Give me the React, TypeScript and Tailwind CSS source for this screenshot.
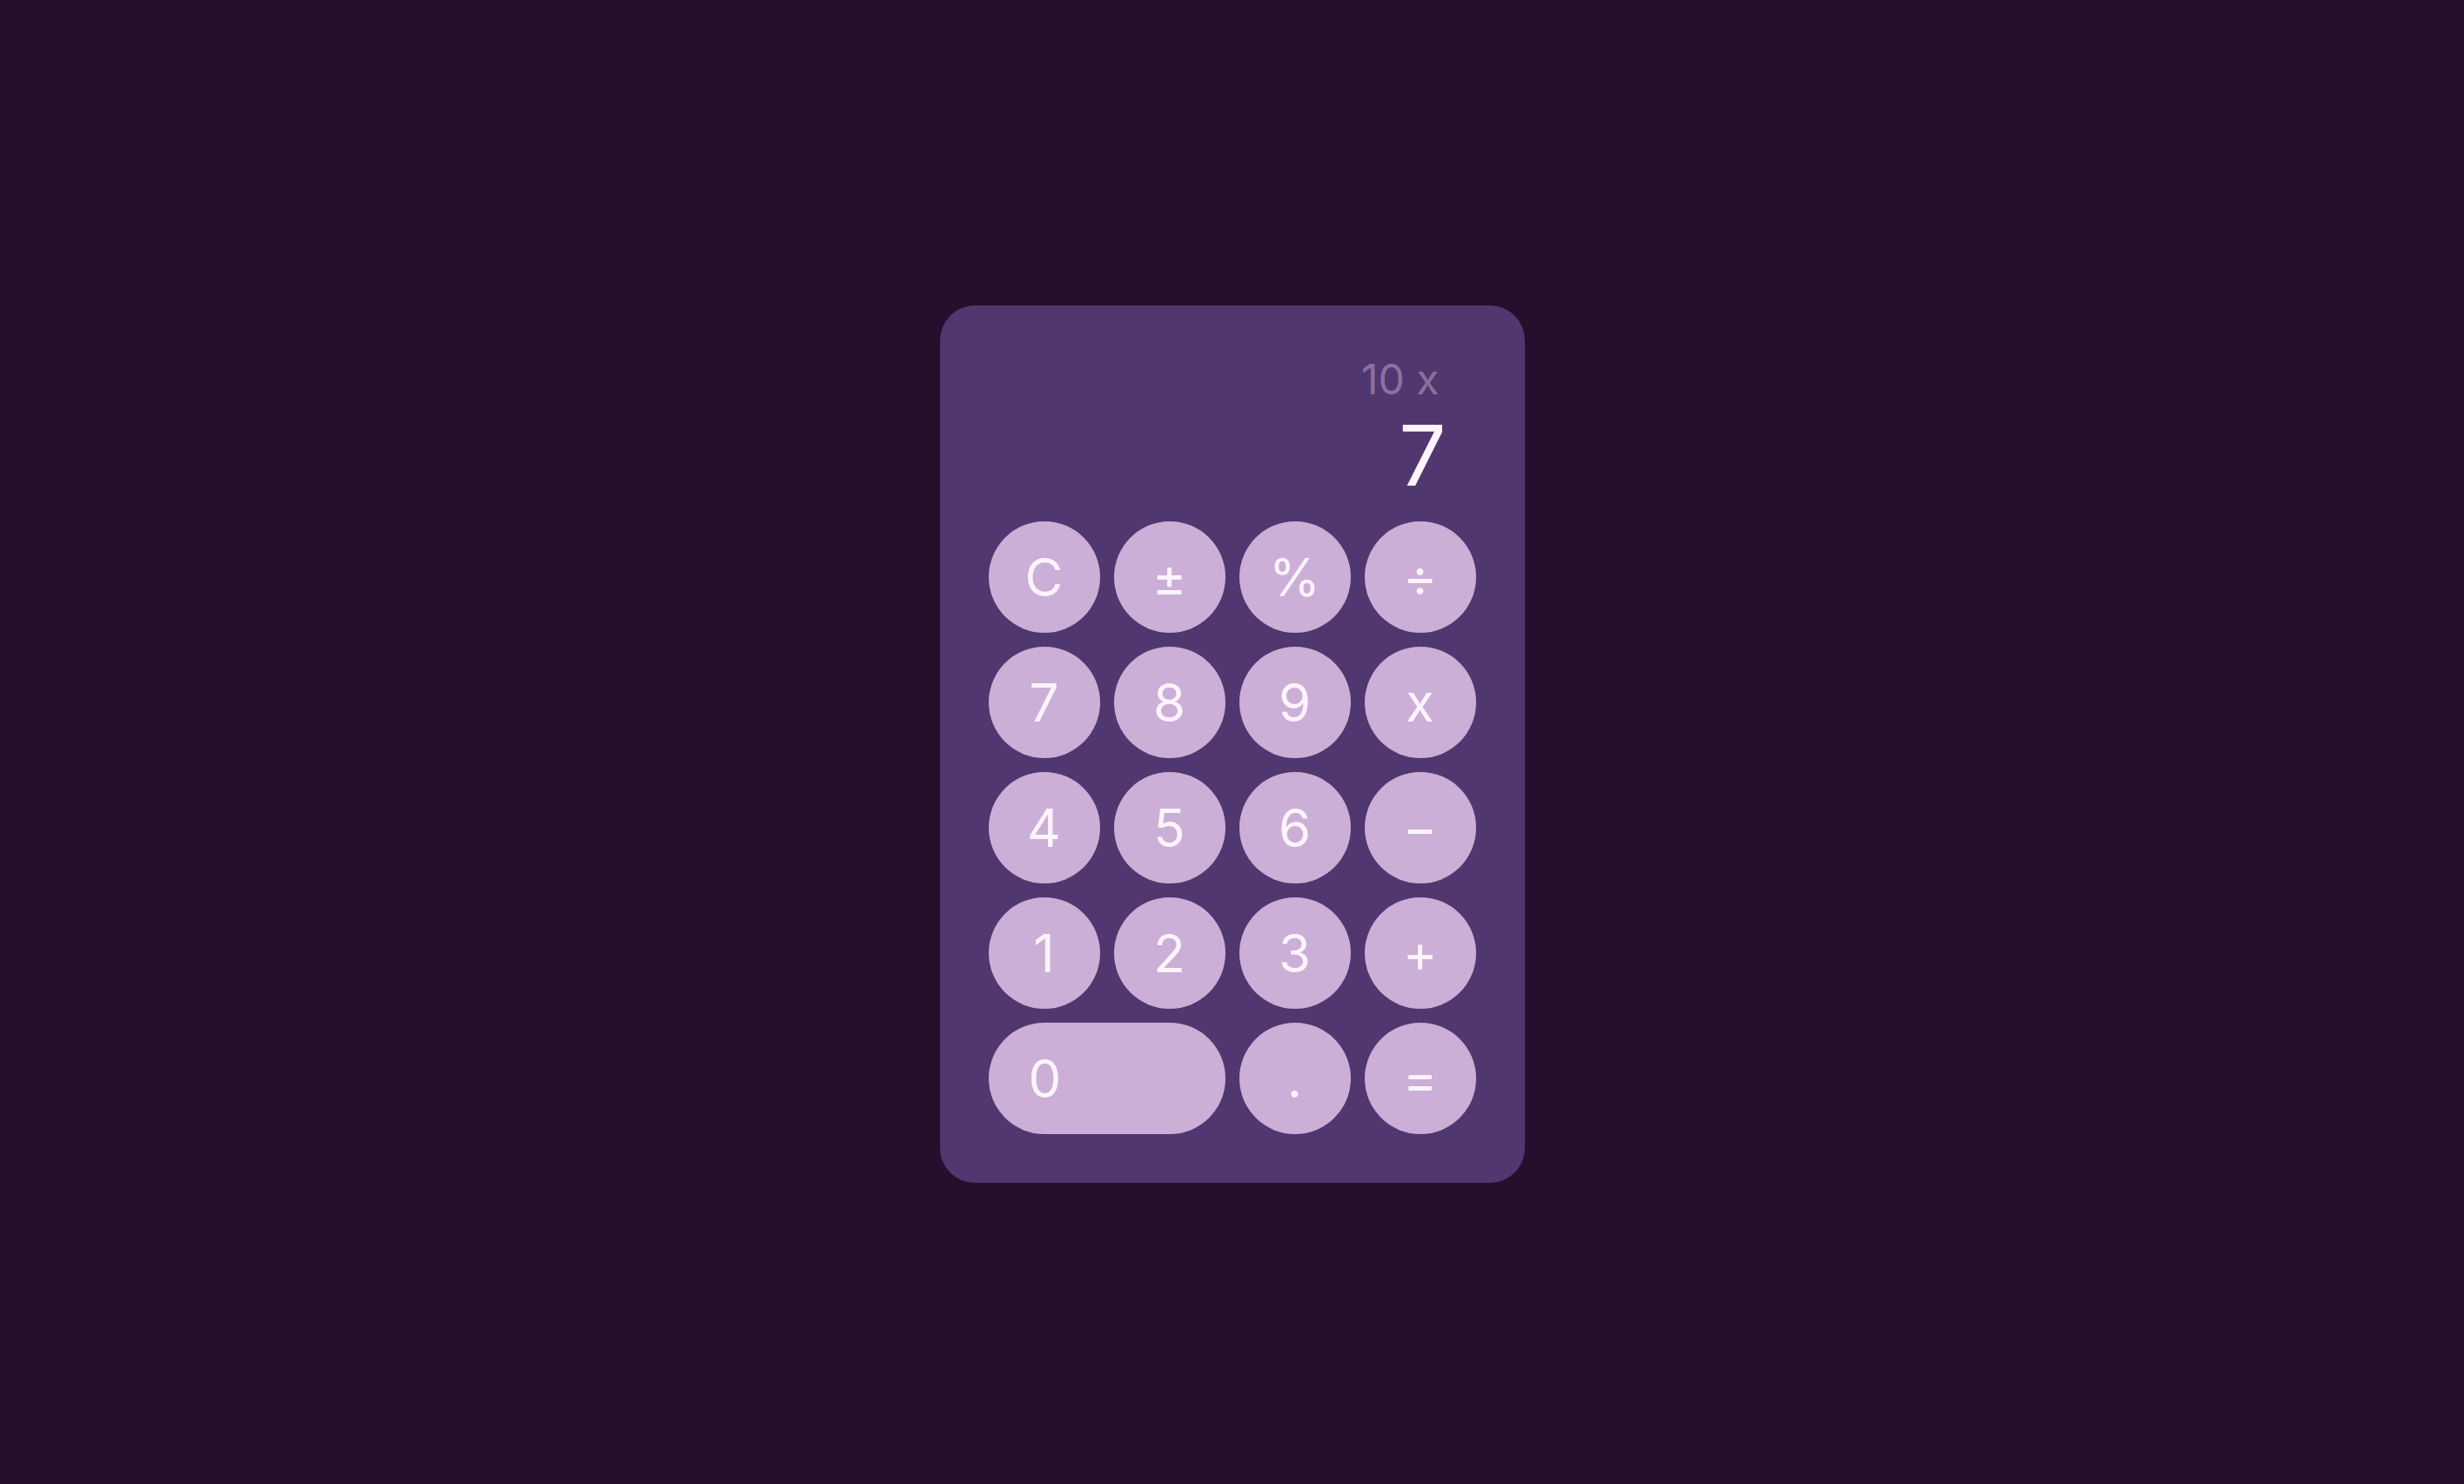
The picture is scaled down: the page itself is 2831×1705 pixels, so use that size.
type Key = {
  label: string;
  wide?: boolean;
};

const keys: Key[] = [
  { label: "C" },
  { label: "±" },
  { label: "%" },
  { label: "÷" },
  { label: "7" },
  { label: "8" },
  { label: "9" },
  { label: "x" },
  { label: "4" },
  { label: "5" },
  { label: "6" },
  { label: "−" },
  { label: "1" },
  { label: "2" },
  { label: "3" },
  { label: "+" },
  { label: "0", wide: true },
  { label: "." },
  { label: "=" },
];

function CalcKey({ label, wide }: Key) {
  if (wide) {
    return (
      <button className="col-span-2 flex h-[128px] items-center justify-start rounded-full bg-[#cbafd6] pl-[46px] text-[60px] leading-none text-[#fdf4ff]">
        {label}
      </button>
    );
  }
  return (
    <button className="flex h-[128px] w-[128px] items-center justify-center rounded-full bg-[#cbafd6] text-[60px] leading-none text-[#fdf4ff]">
      {label}
    </button>
  );
}

export default function App() {
  return (
    <div
      className="flex min-h-screen items-center justify-center bg-[#250f2d] pt-[4px]"
      style={{ fontFamily: "Inter, 'Noto Sans', sans-serif" }}
    >
      <div className="flex w-[672px] flex-col rounded-[40px] bg-[#51376f] p-[56px]">
        <div className="flex flex-col items-end pr-[34px]">
          <div className="pr-[8px] text-[48px] leading-[58px] text-[#8c709e]">10 x</div>
          <div className="mt-[10px] text-[96px] leading-none text-[#fdf4ff]">7</div>
        </div>
        <div className="mt-[28px] grid grid-cols-4 gap-[16px]">
          {keys.map((k) => (
            <CalcKey key={k.label} {...k} />
          ))}
        </div>
      </div>
    </div>
  );
}
